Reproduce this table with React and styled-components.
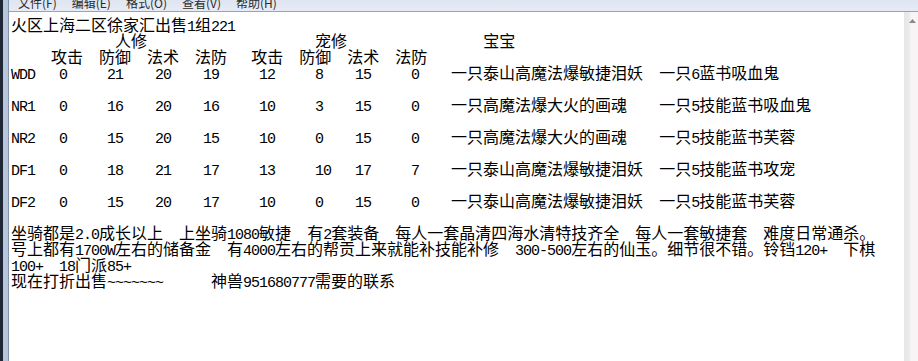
import React from 'react';
import styled, { createGlobalStyle } from 'styled-components';

const CJK = '"Noto Sans CJK SC", "Noto Sans CJK JP", sans-serif';
const MONO = '"Liberation Mono", "DejaVu Sans Mono", monospace';

const GlobalStyle = createGlobalStyle`
  html, body {
    margin: 0;
    padding: 0;
    background: #1f2737;
  }
  body {
    width: 918px;
    height: 361px;
    overflow: hidden;
  }
`;

const menus = ['文件(F)', '编辑(E)', '格式(O)', '查看(V)', '帮助(H)'];

const headers = ['攻击', '防御', '法术', '法防', '攻击', '防御', '法术', '法防'];
const headerCols = [5, 11, 17, 23, 30, 36, 42, 48];
const statCols = [6, 12, 18, 24, 31, 38, 43, 50];

const rows = [
  { name: 'WDD', stats: [0, 21, 20, 19, 12, 8, 15, 0], pet: '一只泰山高魔法爆敏捷泪妖', book: '一只6蓝书吸血鬼' },
  { name: 'NR1', stats: [0, 16, 20, 16, 10, 3, 15, 0], pet: '一只高魔法爆大火的画魂', book: '一只5技能蓝书吸血鬼' },
  { name: 'NR2', stats: [0, 15, 20, 15, 10, 0, 15, 0], pet: '一只高魔法爆大火的画魂', book: '一只5技能蓝书芙蓉' },
  { name: 'DF1', stats: [0, 18, 21, 17, 13, 10, 17, 7], pet: '一只泰山高魔法爆敏捷泪妖', book: '一只5技能蓝书攻宠' },
  { name: 'DF2', stats: [0, 15, 20, 17, 10, 0, 15, 0], pet: '一只泰山高魔法爆敏捷泪妖', book: '一只5技能蓝书芙蓉' }
];

// half-width chars take one column, everything else two
const widthOf = (text) => [...text].reduce((w, ch) => w + (ch.charCodeAt(0) < 0x80 ? 1 : 2), 0);

// put text pieces at fixed columns, like typing them in notepad
const place = (segments) => {
  let line = '';
  let col = 0;
  segments.forEach(([at, text]) => {
    line += ' '.repeat(Math.max(0, at - col)) + text;
    col = Math.max(col, at) + widthOf(text);
  });
  return line;
};

const doc = [
  place([[0, '火区上海二区徐家汇出售1组221']]),
  place([[13, '人修'], [38, '宠修'], [59, '宝宝']]),
  place(headers.map((h, i) => [headerCols[i], h])),
  ...rows.flatMap((r) => [
    place([
      [0, r.name],
      ...r.stats.map((v, i) => [statCols[i], String(v)]),
      [55, r.pet],
      [81, r.book]
    ]),
    ''
  ]),
  place([
    [0, '坐骑都是2.0成长以上'],
    [21, '上坐骑1080敏捷'],
    [37, '有2套装备'],
    [48, '每人一套晶清四海水清特技齐全'],
    [78, '每人一套敏捷套'],
    [94, '难度日常通杀。']
  ]),
  place([
    [0, '号上都有1700W左右的储备金'],
    [27, '有4000左右的帮贡上来就能补技能补修'],
    [63, '300-500左右的仙玉。细节很不错。铃铛120+'],
    [104, '下棋']
  ]),
  place([[0, '100+'], [6, '18门派85+']]),
  place([[0, '现在打折出售~~~~~~~'], [25, '神兽951680777需要的联系']])
];

const renderRuns = (line) =>
  line
    .split(/([\x00-\x7f]+)/)
    .filter(Boolean)
    .map((part, i) => (part.charCodeAt(0) < 0x80 ? <Half key={i}>{part}</Half> : <span key={i}>{part}</span>));

const App = () => {
  return (
    <>
      <GlobalStyle />
      <Desktop>
        <Frame>
          <Client>
            <MenuBar>
              {menus.map((m) => (
                <MenuItem key={m}>{m}</MenuItem>
              ))}
            </MenuBar>
            <EditorRow>
              <TextArea>
                {doc.map((line, i) => (
                  <Line key={i}>{renderRuns(line)}</Line>
                ))}
              </TextArea>
              <ScrollBar>
                <ArrowButton>
                  <svg width="7" height="4" viewBox="0 0 7 4">
                    <path d="M0 4 L3.5 0 L7 4 Z" fill="#8a8a8a" />
                  </svg>
                </ArrowButton>
              </ScrollBar>
            </EditorRow>
          </Client>
        </Frame>
      </Desktop>
    </>
  );
};

export default App;

const Desktop = styled.div`
  display: flex;
  width: 918px;
  height: 361px;
  background: #1f2737;
`;

const Frame = styled.div`
  display: flex;
  flex: 1;
  margin-left: 3px;
  padding-left: 5px;
  background: linear-gradient(to right, #b7c6da, #cbd7e6);
`;

const Client = styled.div`
  display: flex;
  flex-direction: column;
  flex: 1;
  border-left: 1px solid #8393aa;
  background: #ffffff;
`;

const MenuBar = styled.div`
  display: flex;
  align-items: flex-end;
  height: 11px;
  padding-left: 2px;
  overflow: hidden;
  background: linear-gradient(to bottom, #dfe5f1, #e6ebf5);
  border-bottom: 1px solid #97a3b6;
`;

const MenuItem = styled.div`
  padding: 0 7px;
  margin-right: 1px;
  font-family: ${CJK};
  font-size: 12px;
  line-height: 16px;
  color: #2a2a2a;
  white-space: nowrap;
`;

const EditorRow = styled.div`
  display: flex;
  flex: 1;
  min-height: 0;
`;

const TextArea = styled.div`
  flex: 1;
  padding: 4px 0 0 2px;
  font-family: ${CJK};
  font-size: 16px;
  color: #000000;
  overflow: hidden;
`;

const Line = styled.div`
  height: 16px;
  line-height: 16px;
  white-space: pre;
`;

/* latin runs: one column = 8px, as in the notepad's fixed font */
const Half = styled.span`
  font-family: ${MONO};
  font-size: 15px;
  letter-spacing: -1px;
`;

const ScrollBar = styled.div`
  display: flex;
  flex-direction: column;
  width: 14px;
  background: linear-gradient(to right, #e6e6e6 0, #ebebeb 40%, #f4f4f4 45%, #f6f6f6 70%, #f8f4f6 72%);
`;

const ArrowButton = styled.div`
  display: flex;
  justify-content: center;
  align-items: center;
  height: 17px;
  padding-left: 3px;
`;
